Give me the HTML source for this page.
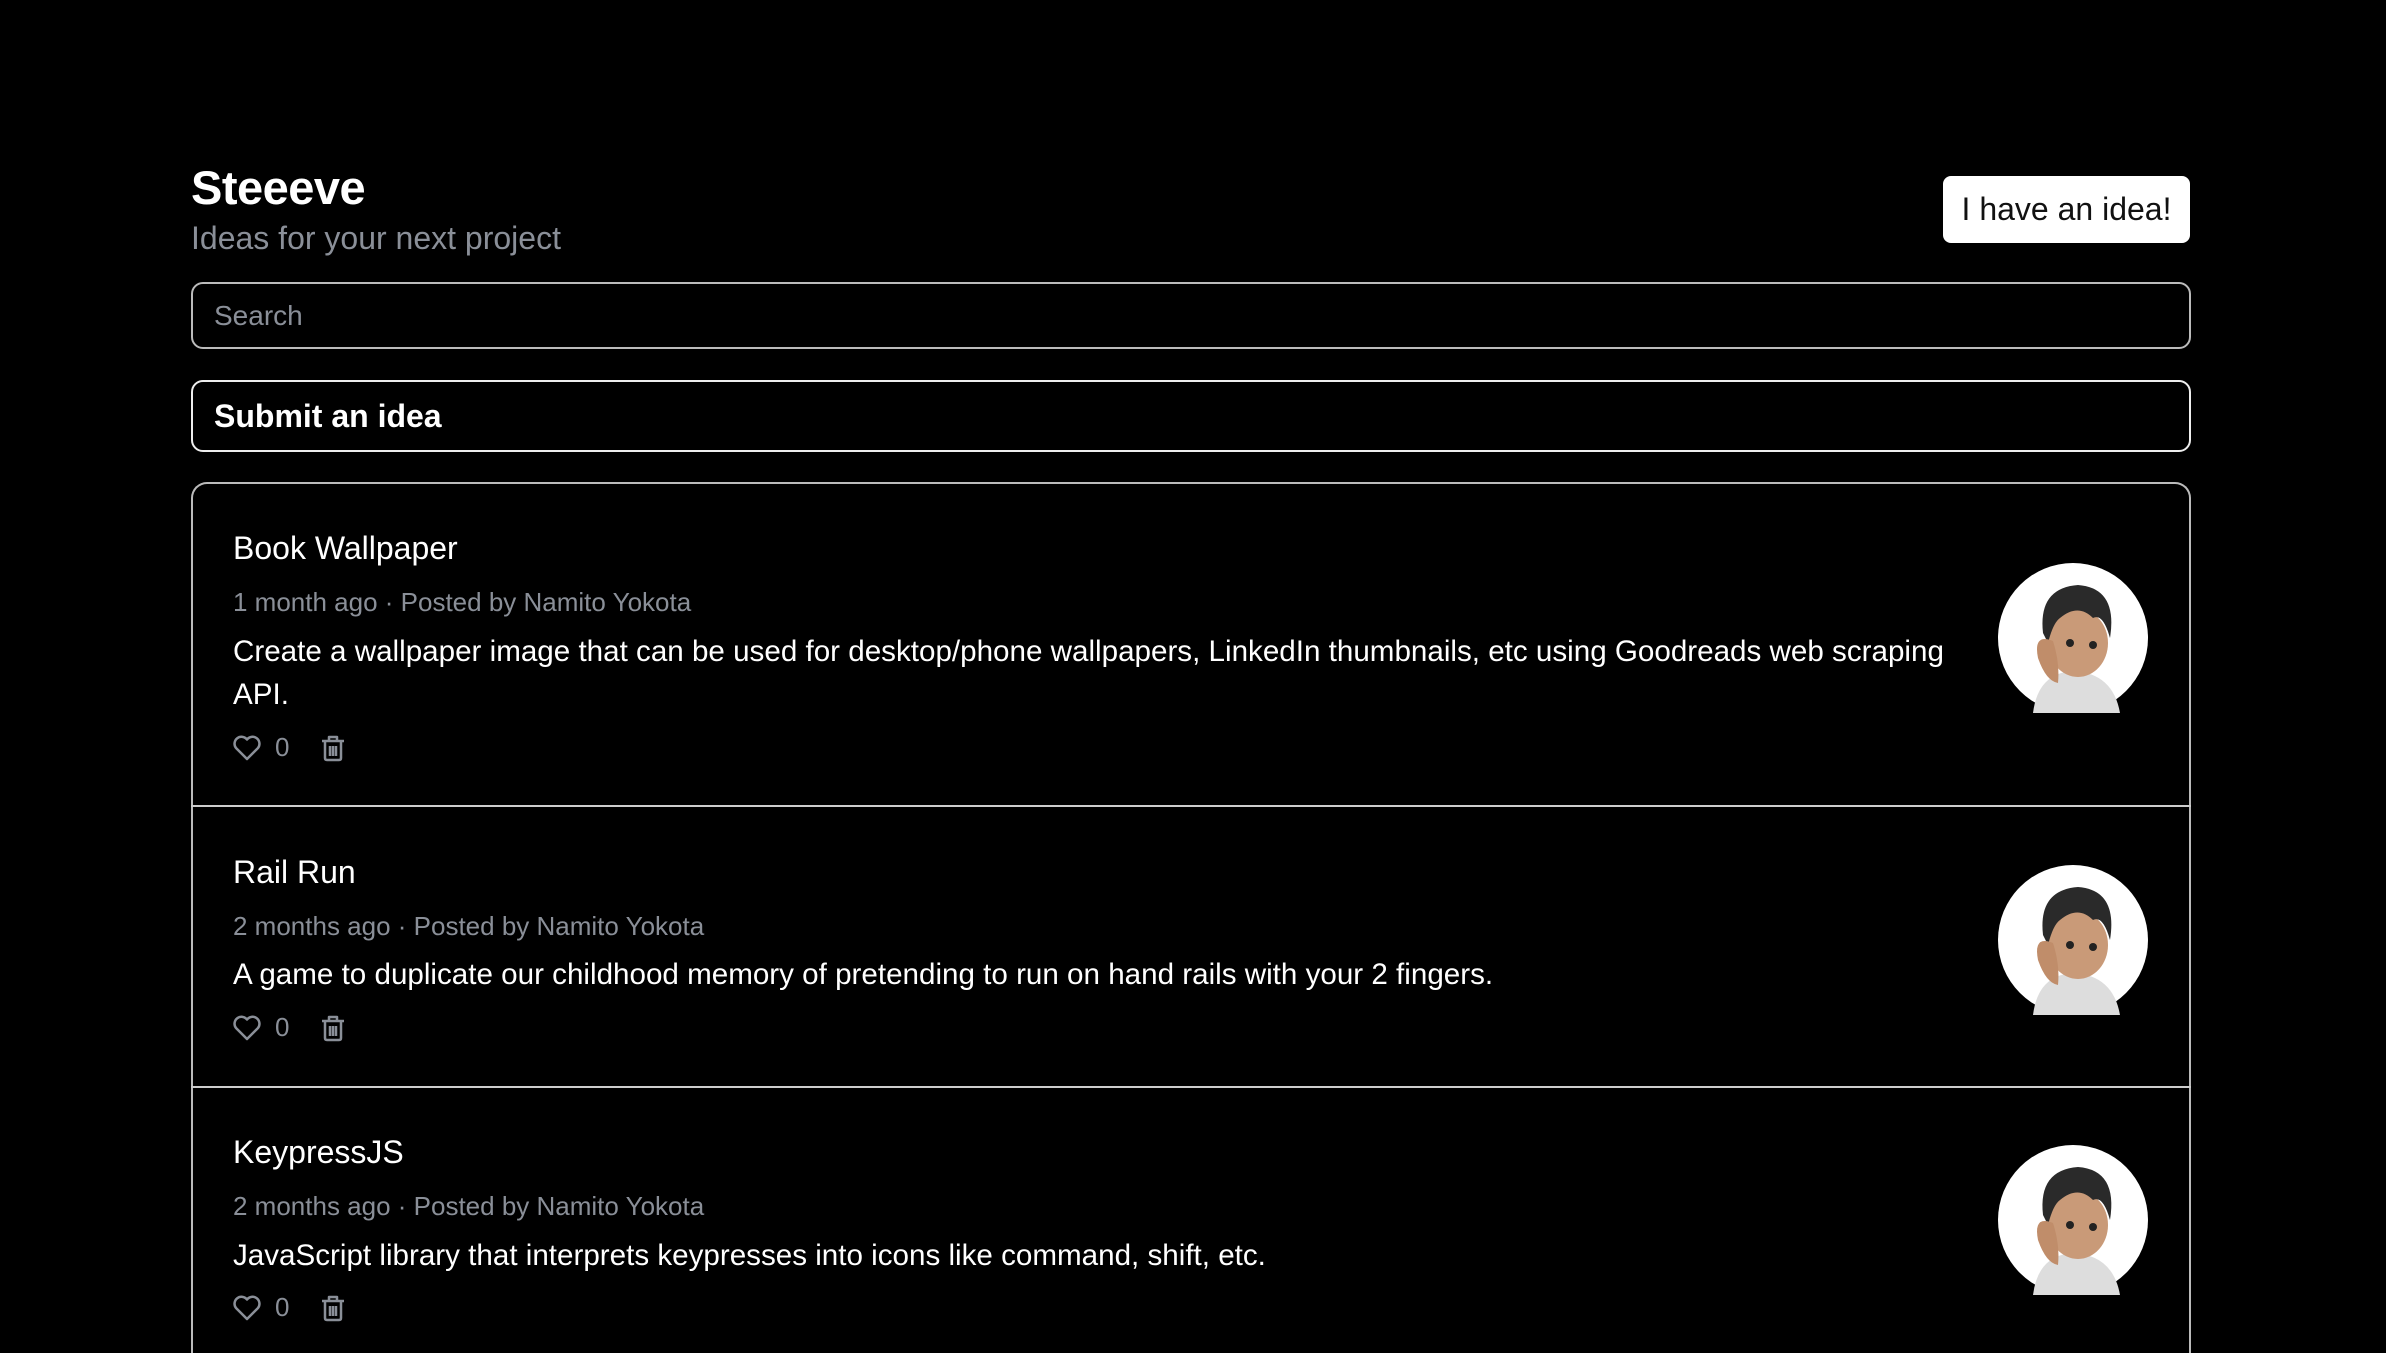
<!DOCTYPE html>
<html><head><meta charset="utf-8"><style>
*{margin:0;padding:0;box-sizing:border-box}
html,body{width:2386px;height:1353px;overflow:hidden}
body{background:#000;font-family:"Liberation Sans",sans-serif;color:#fff;position:relative}
.a{position:absolute;white-space:nowrap}
.title{left:191px;top:160px;font-size:47px;font-weight:bold;letter-spacing:-0.5px}
.sub{left:191px;top:220px;font-size:32px;color:#8a8f98}
.btn{left:1943px;top:176px;width:247px;height:67px;background:#fff;border-radius:8px;color:#111;font-size:32px;display:flex;align-items:center;justify-content:center}
.search{left:191px;top:282px;width:2000px;height:67px;border:2px solid #bbb;border-radius:12px;font-size:28px;color:#8a8f98;padding-left:21px;display:flex;align-items:center}
.submit{left:191px;top:380px;width:2000px;height:72px;border:2px solid #eee;border-radius:12px;font-size:32px;font-weight:bold;padding-left:21px;display:flex;align-items:center}
.card{left:191px;top:482px;width:2000px;height:871px;border:2px solid #bbb;border-bottom:none;border-radius:16px 16px 0 0}
.hr{left:191px;width:2000px;height:2px;background:#ccc}
.t{font-size:32px;left:233px}
.m{font-size:26px;color:#8a8f98;left:233px}
.d{font-size:29.6px;left:233px;line-height:43px}
.av{position:absolute;left:1998px;width:150px;height:150px}
.act{position:absolute;left:233px;display:flex;align-items:center;color:#8a8f98;font-size:26px}
</style></head><body>
<div class="a title">Steeeve</div>
<div class="a sub">Ideas for your next project</div>
<div class="a btn">I have an idea!</div>
<div class="a search">Search</div>
<div class="a submit">Submit an idea</div>
<div class="a card"></div>
<div class="a hr" style="top:805px"></div>
<div class="a hr" style="top:1086px"></div>

<svg width="0" height="0" style="position:absolute"><defs>
<g id="avatar">
<circle cx="75" cy="75" r="75" fill="#fff"/>
<path d="M35 150 Q40 110 75 108 Q115 110 122 150 Z" fill="#ddd"/>
<ellipse cx="80" cy="80" rx="30" ry="34" fill="#c99a78"/>
<path d="M45 70 Q40 25 80 22 Q120 25 112 75 Q105 50 95 55 Q80 40 62 55 Q55 60 50 80 Z" fill="#2a2a2a"/>
<path d="M40 95 Q35 70 55 78 Q62 100 60 120 Q48 118 40 95Z" fill="#c08d6a"/>
<circle cx="72" cy="80" r="4" fill="#222"/><circle cx="95" cy="82" r="4" fill="#222"/>
</g>
<g id="heart"><path d="M14 25 L3 14 A6.5 6.5 0 0 1 14 5.5 A6.5 6.5 0 0 1 25 14 Z" fill="none" stroke="#8a8f98" stroke-width="2.5" stroke-linejoin="round"/></g>
<g id="trash"><path d="M3 7 H25 M10 6 V3 H18 V6 M6 8 V24 Q6 26 8 26 H20 Q22 26 22 24 V8 M11 12 V22 M14 12 V22 M17 12 V22" fill="none" stroke="#8a8f98" stroke-width="2.5" stroke-linejoin="round"/></g>
</defs></svg>

<div class="a t" style="top:530px">Book Wallpaper</div>
<div class="a m" style="top:587px">1 month ago · Posted by Namito Yokota</div>
<div class="a d" style="top:630px;white-space:normal;width:1740px">Create a wallpaper image that can be used for desktop/phone wallpapers, LinkedIn thumbnails, etc using Goodreads web scraping API.</div>
<div class="act" style="top:732px"><svg width="28" height="28"><use href="#heart"/></svg><span style="margin-left:14px">0</span><svg width="28" height="28" style="margin-left:30px"><use href="#trash"/></svg></div>
<svg class="av" style="top:563px"><use href="#avatar"/></svg>

<div class="a t" style="top:854px">Rail Run</div>
<div class="a m" style="top:911px">2 months ago · Posted by Namito Yokota</div>
<div class="a d" style="top:953px">A game to duplicate our childhood memory of pretending to run on hand rails with your 2 fingers.</div>
<div class="act" style="top:1012px"><svg width="28" height="28"><use href="#heart"/></svg><span style="margin-left:14px">0</span><svg width="28" height="28" style="margin-left:30px"><use href="#trash"/></svg></div>
<svg class="av" style="top:865px"><use href="#avatar"/></svg>

<div class="a t" style="top:1134px">KeypressJS</div>
<div class="a m" style="top:1191px">2 months ago · Posted by Namito Yokota</div>
<div class="a d" style="top:1234px">JavaScript library that interprets keypresses into icons like command, shift, etc.</div>
<div class="act" style="top:1292px"><svg width="28" height="28"><use href="#heart"/></svg><span style="margin-left:14px">0</span><svg width="28" height="28" style="margin-left:30px"><use href="#trash"/></svg></div>
<svg class="av" style="top:1145px"><use href="#avatar"/></svg>
</body></html>
